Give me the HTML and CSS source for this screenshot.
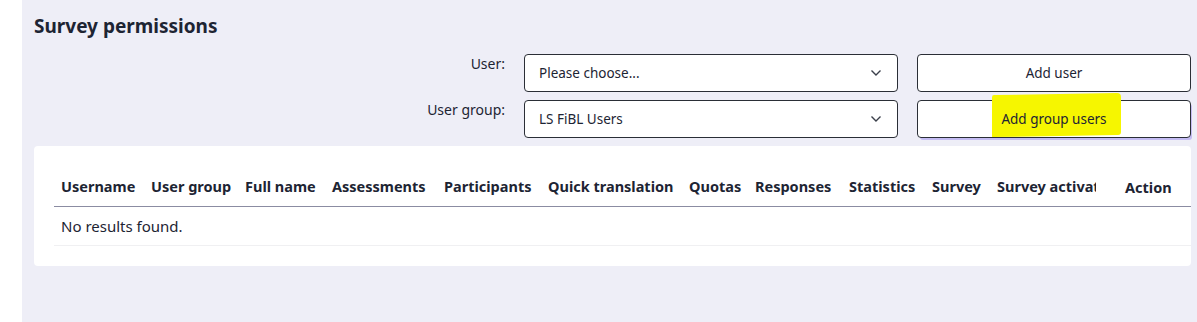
FILE: index.html
```html
<!DOCTYPE html>
<html lang="en">
<head>
  <meta charset="UTF-8">
  <title>Survey permissions</title>
  <link rel="stylesheet" href="styles.css">
</head>
<body>
  <div class="wrapper">
    <div class="side"></div>

    <div class="main">
      <h1>Survey permissions</h1>

      <div class="add-form">
        <label class="form-label">User:</label>
        <div class="select-box">
          <span>Please choose...</span>
          <svg class="chevron" width="12" height="8" viewBox="0 0 12 8"><path d="M1.5 1.5 L6 6 L10.5 1.5" fill="none" stroke="#3a3f4a" stroke-width="1.4"/></svg>
        </div>
        <button class="btn">Add user</button>

        <label class="form-label">User group:</label>
        <div class="select-box">
          <span>LS FiBL Users</span>
          <svg class="chevron" width="12" height="8" viewBox="0 0 12 8"><path d="M1.5 1.5 L6 6 L10.5 1.5" fill="none" stroke="#3a3f4a" stroke-width="1.4"/></svg>
        </div>
        <button class="btn btn-active"><span class="marked">Add group users</span></button>
      </div>

      <div class="card">
        <div class="table-scroll">
          <table class="perm-table">
            <colgroup>
              <col style="width: 90px">
              <col style="width: 94px">
              <col style="width: 87px">
              <col style="width: 112px">
              <col style="width: 104px">
              <col style="width: 141px">
              <col style="width: 66px">
              <col style="width: 94px">
              <col style="width: 83px">
              <col style="width: 65px">
              <col style="width: 128px">
              <col style="width: 73px">
            </colgroup>
            <thead>
              <tr>
                <th>Username</th>
                <th>User group</th>
                <th>Full name</th>
                <th>Assessments</th>
                <th>Participants</th>
                <th>Quick translation</th>
                <th>Quotas</th>
                <th>Responses</th>
                <th>Statistics</th>
                <th>Survey</th>
                <th><span class="cut">Survey activation</span></th>
                <th class="action">Action</th>
              </tr>
            </thead>
            <tbody>
              <tr>
                <td colspan="12">No results found.</td>
              </tr>
            </tbody>
          </table>
        </div>
      </div>
    </div>
  </div>
</body>
</html>
```

FILE: styles.css
```css
* {
  margin: 0;
  padding: 0;
  box-sizing: border-box;
  font-family: 'Noto Sans', sans-serif;
}

html, body {
  width: 100%;
  height: 100%;
  background: #ffffff;
  color: #1d2433;
  overflow: hidden;
}

.wrapper {
  display: flex;
  height: 100vh;
}

.side {
  width: 22px;
  flex-shrink: 0;
  background: #ffffff;
}

.main {
  flex: 1;
  min-width: 0;
  background: #eeeef7;
  padding: 14px 6px 0 12px;
}

h1 {
  font-size: 19px;
  font-weight: 700;
  line-height: 24px;
  color: #1d2433;
  margin-bottom: 16px;
}

.add-form {
  display: grid;
  grid-template-columns: 471px 374px 274px;
  column-gap: 19px;
  row-gap: 8px;
  justify-content: end;
}

.form-label {
  text-align: right;
  font-size: 14px;
  line-height: 20px;
  color: #1d2433;
}

.select-box {
  height: 38px;
  background: #ffffff;
  border: 1px solid #2a2e36;
  border-radius: 4px;
  display: flex;
  align-items: center;
  justify-content: space-between;
  padding: 0 13px 0 14px;
  font-size: 13.5px;
  color: #1d2433;
}

.chevron {
  margin-right: 2px;
}

.btn {
  height: 38px;
  background: #ffffff;
  border: 1px solid #2a2e36;
  border-radius: 4px;
  font-size: 13.5px;
  color: #1d2433;
  font-family: 'Noto Sans', sans-serif;
  cursor: pointer;
}

.btn-active {
  box-shadow: 2px 3px 0 -1px #c4bcf3;
}

.marked {
  position: relative;
  z-index: 0;
}

.marked::before {
  content: "";
  position: absolute;
  left: -9px;
  right: -15px;
  top: -16px;
  bottom: -8px;
  background: #f6f600;
  z-index: -1;
  border-radius: 2px 4px 3px 1px;
  transform: skewY(-1deg);
}

.card {
  margin-top: 8px;
  width: 1157px;
  background: #ffffff;
  border-radius: 4px;
  padding: 20px 0 20px 20px;
}

.table-scroll {
  overflow: hidden;
}

.perm-table {
  table-layout: fixed;
  border-collapse: collapse;
  width: 1137px;
}

.perm-table th {
  text-align: left;
  font-size: 14.5px;
  font-weight: 700;
  height: 40px;
  padding: 0 7px;
  white-space: nowrap;
  overflow: hidden;
  border-bottom: 1px solid #8b8ca2;
  color: #1d2433;
}

.perm-table th .cut {
  display: block;
  width: 99px;
  overflow: hidden;
}

.perm-table th.action {
  padding-top: 2px;
}

.perm-table td {
  font-size: 15px;
  height: 39px;
  padding: 0 7px;
  border-bottom: 1px solid #f0f0f2;
  color: #1d2433;
}
```
